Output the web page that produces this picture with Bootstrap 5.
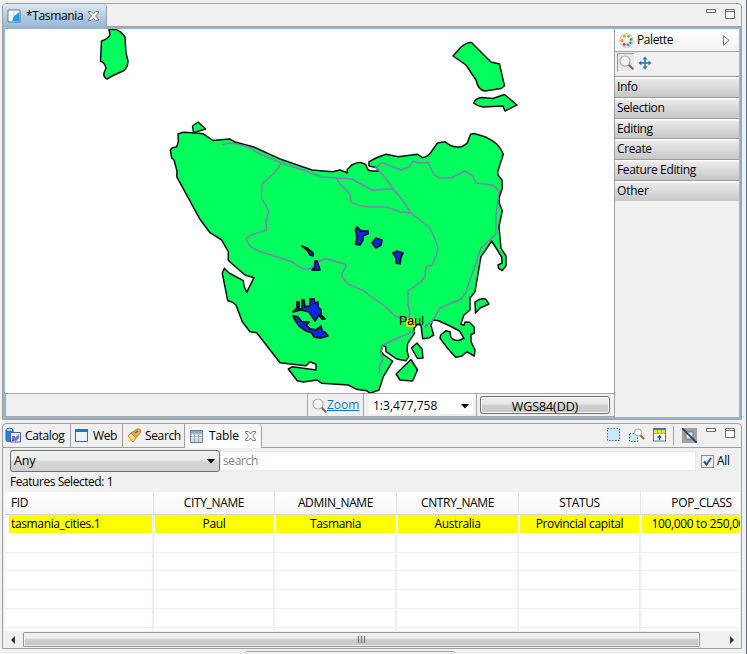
<!DOCTYPE html>
<html lang="en">
<head>
<meta charset="utf-8">
<title>Tasmania</title>
<link href="https://cdn.jsdelivr.net/npm/bootstrap@5.3.0/dist/css/bootstrap.min.css" rel="stylesheet">
<style>
body{width:747px;height:654px;overflow:hidden;background:#f0f0f0;font:12px/16px "Open Sans","Noto Sans",sans-serif;letter-spacing:-.36px;color:#000;white-space:nowrap}
svg{display:block;flex:none}
.shell{width:747px;height:654px;padding:3px 4px 0 2px;border-right:1px solid #5a6f82}
.pane{width:740px;border:1px solid #a0a0a0;border-radius:4px 4px 0 0}
.editor{height:417px}
.views{height:226px;margin-top:3px}
.tabstrip{height:23px;border-bottom:1px solid #a0a0a0}
.views .tabstrip{height:24px}
.edtab{width:104px;height:25px;padding:0 0 2px 4px;background:linear-gradient(#dfe8f1,#b4cbe0 50%,#92b5d3);border-right:1px solid #a0a0a0;border-radius:3px 4px 0 0;z-index:1}
.edtab span{width:56px;margin:0 6px 0 5px}
.winbtns{gap:9px;padding:4px 6px 0 0}
.frame{height:392px;background:#92b5d3;padding:2px}
.mapcol{width:609px;background:#fff}
.statusbar{height:24px;background:#f0f0f0;border:1px solid #a9a9a9;border-width:1px 0 1px 1px;padding-right:2px}
.palette-col{width:125px;background:#f0f0f0;border-left:1px solid #a0a0a0}
.pal-head{height:23px;padding:0 9px 0 4px;background:linear-gradient(#fff,#f2f2f2);border-bottom:1px solid #a0a0a0}
.pal-head span{margin-left:3px;letter-spacing:-.42px}
.pal-tools{height:24px;padding:1px 0 0 2px}
.pressed{width:18px;height:19px;border:1px solid;border-color:#999 #fff #fff #999;background:#e8e8e8;padding:1px}
.pan-icon{margin:3px 0 0 3px}
.drawer{height:20.8px;line-height:20px;padding-left:2px;border-top:1px solid #9c9c9c;background:linear-gradient(#fff 0,#fff 1px,#eaeaea 2px,#c6c6c6 100%)}
.drawer:last-child{letter-spacing:-.2px}
.sep{width:1px;background:#a5a5a5;align-self:stretch}
.zoomcell{width:55px;padding-left:4px}
.zoomlink{color:#0b74cf;text-decoration:underline;letter-spacing:0}
.scalebox{width:104px;height:20px;background:#fff;padding:4px 4px 0 4px;margin-left:5px;margin-right:3px;letter-spacing:0}
.crs{width:130px;height:18px;border:1px solid #707070;border-radius:3px;background:linear-gradient(#f2f2f2,#e6e6e6 45%,#cfcfcf 50%,#c8c8c8);box-shadow:inset 0 0 0 1px #f8f8f8;text-align:center;line-height:19px;font-size:12.5px;letter-spacing:-.1px;margin:2px 2px 0 3px;overflow:hidden}
.viewtab{height:23px;border-right:1px solid #a0a0a0}
.vt-catalog{width:68px;padding-left:2px;gap:3px}
.vt-web{width:52px;padding-left:4px;gap:5px}
.vt-search{width:62px;padding-left:3px;gap:3px}
.vt-table{width:77px;height:24px;padding-left:5px;gap:6px;border-radius:0 4px 0 0;background:linear-gradient(#f4f4f4,#fff)}
.vt-table span{letter-spacing:-.1px}
.toolrow{padding:4px 6px 0 0}
.toolrow .sep{margin:-2px 8px 3px 7px;height:19px}
.ic-a{margin-left:9px}
.ic-b{margin-left:8px}
.wb{margin:-1px 0 0 9px}
.filterrow{height:25px;padding:1px 0 0 7px}
.countrow{height:19px;padding:1px 0 0 7px;letter-spacing:-.45px}
.anybox{width:210px;height:22px;border:1px solid #707070;border-radius:3px;background:linear-gradient(#f2f2f2,#e8e8e8 48%,#d6d6d6 52%,#cfcfcf);padding:0 4px 0 3px;font-size:12.5px;letter-spacing:-.2px}
.searchbox{width:476px;height:20px;background:#fff;border:1px solid #e3e9ef;color:#838383;padding-left:2px;line-height:17px}
.chk{width:13px;height:13px;border:1px solid #8e8f8f;background:#eef1f4;margin:0 3px 0 5px}
.gridwrap{width:735px;height:139px;margin-left:2px;background:#fff;overflow:hidden}
.attrs{width:758px;table-layout:fixed;border-collapse:separate;border-spacing:0;text-align:center}
.c-fid{width:149px}.c-city{width:121px}.c-rest{width:122px}
.attrs th{font-weight:400;height:23px;padding:0;background:linear-gradient(#fff,#f5f6f7);border-right:1px solid #e2e5e9;border-bottom:1px solid #d5d5d5}
.attrs td{height:18.8px;line-height:16px;padding:0;border-right:2px solid #e9f0f9;border-bottom:1px solid #f0f0f0}
.attrs .hit td{background:#ff0;border-left:1px solid #fff;border-bottom:1px solid #fff}
.attrs th:first-child,.attrs td:first-child{text-align:left;padding-left:6px}
.attrs .hit td:first-child{border-left:4px solid #fff;padding-left:2px}
.hscroll{height:17px;width:735px;margin-left:2px;background:#f0f0f0}
.thumb{width:677px;height:15px;border:1px solid #979797;border-radius:1px;background:linear-gradient(#f5f5f5,#e6e6e6 46%,#cfcfcf 50%,#c6c6c6);box-shadow:inset 0 0 0 1px #eee}
.nextpane{height:3px;width:210px;margin:2px 0 0 243px;border-top:1px solid #a0a0a0;border-radius:3px 3px 0 0}
</style>
<script src="https://cdn.jsdelivr.net/npm/bootstrap@5.3.0/dist/js/bootstrap.bundle.min.js"></script>
</head>
<body>
<svg width="0" height="0" class="position-absolute">
<defs>
<g id="i-close" fill="#fff" stroke="#666" stroke-width=".9"><path d="M.5.5h2.8L5.5 3 7.7.5h2.8v1.2L7.6 5l2.9 3.4v1.2H7.7L5.5 7.200 3.300 9.600H.5V8.400L3.400 5 .5 1.700z"/></g>
<g id="i-win" fill="#fff" stroke="#6a6a6a"><path d="M.5 1.500h9v9h-9z"/><path d="M.5 3.500h9" /></g>
<g id="i-min" fill="#fff" stroke="#6a6a6a"><path d="M.5 1.500h9v3h-9z"/></g>
<g id="i-lens"><path d="M9.500 9.500l4.200 4.200" stroke="#8d6258" stroke-width="2.200" stroke-linecap="round"/><circle cx="6" cy="6" r="5" fill="#eef4f7" stroke="#aaa9a0" stroke-width="1.100"/><path d="M3.200 5.500a3 3 0 0 1 3-2.500" fill="none" stroke="#fff" stroke-width="1.300"/></g>
</defs>
</svg>
<div class="shell">
 <section class="pane editor">
  <div class="tabstrip d-flex justify-content-between">
   <div class="edtab d-flex align-items-center">
    <svg width="14" height="14"><path d="M1 1h12v12H1z" fill="#fff" stroke="#687785"/><path d="M1 7h12M7 1v12" stroke="#d5d5d5"/><path d="M5 12.500L7 7l5.500-4v9.500z" fill="#16a0ef"/></svg>
    <span>*Tasmania</span>
    <svg width="11" height="10"><use href="#i-close"/></svg>
   </div>
   <div class="winbtns d-flex"><svg width="10" height="12"><use href="#i-min"/></svg><svg width="10" height="12"><use href="#i-win"/></svg></div>
  </div>
  <div class="frame d-flex">
   <div class="mapcol d-flex flex-column">
    <svg width="608" height="364" viewBox="5 29 608 364">
     <g fill="#00ff5c" stroke="#101010" stroke-width="1.500" stroke-linejoin="round">
      <path d="M178 134L183 132.300 193 132.700 203 133.700 213 140.500 229.500 139 235 142 253 146.700 280 159 312 170 332.700 171.700 340 170 347.300 172.700 347.300 169.500 351.700 165Q357 162 361.500 162.700L365.700 164.500 367.500 169Q369 171.500 373 171L379 171 376 167.500 369 166 369 161.700Q377 157 386 154.300L398.500 156.700 417.500 154.300 422.700 157.700Q427 157 429.500 154.300L437.500 143 445 141.700 450 145.300Q456 148 461.500 146.700 466 145 467.500 142.500L470.500 134.300 474 133.500 485 136.700Q492 140 496.700 144 501 148 503.300 154.300L497.700 171.700 498 175 502 180 502.300 188 499 198.300 499.500 204 502.300 210.700 499 226.700 501 248.300 506 256 506 265.700 502.300 270.500 498.700 268.700 498 265 502 263 501.700 257 491.700 241 481 256.700 480 262 475 291.700 470 298 470 310 464 315 460.700 324.300 464 325.300 465 322 469.500 322.300 474.300 327.300 474.300 333 471 334.500 471 341.700 475 350 474.300 356 466.700 351.700 462 356 455.700 357.300 447.500 348.300 440 338.300 440.700 335 446 330.700 450 331.700 450.700 336.700Q453 341 459 340.500L464 338.300 459.500 331 450 326 438.500 320.700 433 320 431.700 323 431 325.700 433.700 335 429.500 337.700 422.700 338.700 421 325.300 417.500 324.300 414 328.300 414.500 333.300 407.700 343.300 407 351 408.700 356.700 406 360.700 396.700 359 386 351.700 385.700 346.700 382.500 345.300 381 351.700 384 355 392.700 361 383.300 376.700 379 390 370 393.300 366.700 390.700 356.700 389.300 348.300 385 321.700 383.300 317.300 380 303.300 382 297.300 380.700 288.300 369 292.700 366.700 316 370 316 364.300 310 361.700 306 365.700 280 362.700 256.700 332.700 250 331.700 242.300 321.700 236 305 232 302 227.700 300.700 222.300 273.300 224.300 268.300 229 273 243.300 280.700 244 286 246.700 292.300 254 277.700 245 275 230 262 228.300 260 228.300 251.700 221.700 240 210 232.700 200 219.300 176.700 176.700 177 171 174 160 171.700 158 170.300 150 172 148 176.700 146.700 178.300 141.700z"/>
      <path d="M193.500 132.700L192.500 126 198 122 205.500 129z"/>
      <path d="M109 29.500L116 29.500Q122 32 125 37L126 53 128 61Q128 67 124 70.500L112 76 107 79Q103 77 104 73L106 68Q105 63 100.500 61L101.500 41Q108 39 110 35z"/>
      <path d="M453 56L461 47Q467 42 471.500 42.500L491 62 499.500 64 504.500 86 501 88.500 485 91Q478 90 476 80L466 65z"/>
      <path d="M473.500 103Q476 98 482 97.500L493 98.500 504.500 94.500 517 105 505 111 503 106 483 107Q477 106 473.500 103z"/>
      <path d="M475.500 313L475 302Q480 298 485.500 299L489 304 480 308z"/>
      <path d="M411.500 348L417 343 422 349 423 358 417.500 358.500z"/>
      <path d="M396 374L411 359.500 417.500 370 412.500 381 400 380z"/>
     </g>
     <g fill="none" stroke="#7c82ad" stroke-width="1.500" stroke-linejoin="round">
      <path d="M222 145Q227 142 237 144L248 147 258 153 270 158 281 163 300 169 322 177 352 179 373 190.500 393 188.500"/>
      <path d="M281 163Q276 172 271 176L262 184 261.500 198 269 211 266 220 266.500 230 251 235 246 239 250 246Q256 251 268 254L284 259 292 262 301 268Q306 270 311 268L316 263 325 258.500 345 264 346 267 342 273Q342 279 348 284L364 291 373 298 386 307 395 316 408 321"/>
      <path d="M337 179L339 183 350 194 351 202Q357 206 369 207L386 207 401 212 411 213"/>
      <path d="M375 167L384 176 393 188.500 403 201 411 213 430 228 436 242Q440 250 435 258L432 265 426 267 425 276 421 282 408 291 408 304 410 314 407 320"/>
      <path d="M377 170Q377 164 383 163L401 170 409 167 413 161 419 163 428 162.500 434 175 440 178 451 178 465 171 472 175 476 183 492 185Q498 187 499 193L496 215 496 234 481 248 475 266 470 280 466 292 461 299 440 308 432 322 424 327"/>
      <path d="M415 331L400 337 383 345 381 354 383 360 379 367 380 374"/>
     </g>
     <g fill="#0829e8" stroke="#07152d" stroke-width="1.800" stroke-linejoin="round">
      <path d="M357 227L361 231 368 231 368 234 363 236 363 240 360 245 355.500 244 357 238 355.500 230z"/><path d="M376 238L382 240 381 245 376 248 372 243z"/><path d="M393 253L397 251 403 253 401 257 400 264 396 263 396 258z"/>
      <path d="M302 246L307 248 313 253 313 256 310 255 308 251z"/><path d="M315 261L317 261 320 270 312 270 315 267z"/>
      <path d="M293 312L297 308 297 302 299 302 299 309 302 309 302 300 304 300 305 307 310 306 310 299 314 299 315 303 318 302 318 307 321 310 321 315 325 319 322 319 319 315 315 321 309 312 301 310z"/>
      <path d="M293 316L298 317 302 322 309 322 306 325 310 329 316 330 321 326 322 331 325 332 328 336 321 338 314 337 312 333 306 331 299 326 295 320z"/>
     </g>
     <rect x="406" y="318" width="9" height="9" rx="1.500" fill="#f5e01b"/><circle cx="410.500" cy="322.500" r="2.500" fill="none" stroke="#8e9b19"/>
     <text x="399" y="325" font-family="Liberation Sans,sans-serif" font-size="12.500" letter-spacing="0">Paul</text>
    </svg>
    <div class="statusbar d-flex justify-content-end">
     <span class="sep"></span>
     <div class="zoomcell d-flex align-items-center"><svg width="15" height="15"><use href="#i-lens"/></svg><span class="zoomlink">Zoom</span></div>
     <span class="sep"></span>
     <div class="scalebox d-flex align-items-center justify-content-between"><span>1:3,477,758</span><svg width="8" height="5"><path d="M0 0h8L4 4.500z"/></svg></div>
     <span class="sep"></span>
     <div class="crs">WGS84(DD)</div>
    </div>
   </div>
   <aside class="palette-col">
    <div class="pal-head d-flex align-items-center">
     <svg width="15" height="15"><circle cx="7.500" cy="7.500" r="6.800" fill="#e3eefb" stroke="#b3c6e0"/><circle cx="5.500" cy="3.300" r="1.300" fill="#e6a400"/><circle cx="9.500" cy="3.300" r="1.300" fill="#94b60b"/><circle cx="12" cy="6.500" r="1.300" fill="#21a927"/><circle cx="11.500" cy="9.800" r="1.200" fill="#219b48"/><circle cx="9" cy="11.800" r="1.300" fill="#247de0"/><circle cx="5.200" cy="11.500" r="1.400" fill="#e8302d"/><circle cx="3" cy="7.500" r="1.500" fill="#ff9200"/><circle cx="7.500" cy="7.500" r="2" fill="#fff"/></svg>
     <span>Palette</span>
     <svg class="ms-auto" width="7" height="11"><path d="M.5.7L6.200 5.500.5 10.300z" fill="#fff" stroke="#777"/></svg>
    </div>
    <div class="pal-tools d-flex"><div class="pressed"><svg width="15" height="15"><use href="#i-lens"/></svg></div>
     <svg class="pan-icon" width="14" height="14"><path d="M7 2v10M2 7h10" stroke="#2672a8" stroke-width="1.400"/><path d="M7 .5L9.500 3.500h-5zM7 13.500L4.500 10.500h5zM.5 7L3.500 4.500v5zM13.500 7l-3 2.500v-5z" fill="#2672a8"/></svg></div>
    <div class="drawer">Info</div><div class="drawer">Selection</div><div class="drawer">Editing</div><div class="drawer">Create</div><div class="drawer">Feature Editing</div><div class="drawer">Other</div>
   </aside>
  </div>
 </section>
 <section class="pane views">
  <div class="tabstrip d-flex">
   <div class="viewtab vt-catalog d-flex align-items-center"><svg width="17" height="17"><path d="M1 3v10c0 2 7 2 7 0V3" fill="#2384d8" stroke="#1765a8"/><ellipse cx="4.500" cy="3" rx="3.500" ry="1.700" fill="#b7dcf5" stroke="#1765a8"/><path d="M5.500 5.500h10v9.500h-10z" fill="#eef4fd" stroke="#4260b0"/><path d="M7 14V9h3v2l4-4v4l-3 3z" fill="#8169c7"/></svg><span>Catalog</span></div>
   <div class="viewtab vt-web d-flex align-items-center"><svg width="13" height="13"><path d="M.5.5h12v12H.5z" fill="#e7f4fb" stroke="#496b91"/><path d="M0 0h13v3H0z" fill="#1b78c4"/></svg><span>Web</span></div>
   <div class="viewtab vt-search d-flex align-items-center"><svg width="16" height="15"><path d="M0 14l2-6 5 5z" fill="#fff0b8"/><path d="M2 8l3-3 5 5-3 4z" fill="#fbd68a" stroke="#a87328" stroke-width=".8"/><path d="M5 5l6-4q4-1 4 3l-5 6z" fill="#efa54a" stroke="#a87845" stroke-width=".8"/><path d="M9 5l3-2" stroke="#40639e" stroke-width="1.500"/></svg><span>Search</span></div>
   <div class="viewtab vt-table d-flex align-items-center"><svg width="13" height="13"><path d="M.5.5h12v12H.5z" fill="#fff" stroke="#687c9b"/><path d="M1 1h11v2.500H1z" fill="#8ca8ce"/><path d="M1 4h11M1 6.500h11M1 9h11M1 11h11M4.500 1v11M8.500 1v11" stroke="#8fa3bd" stroke-width=".8"/></svg><span>Table</span><svg width="11" height="10"><use href="#i-close"/></svg></div>
   <div class="toolrow d-flex ms-auto align-items-start">
    <svg width="13" height="13"><path d="M.5.5h12v12H.5z" fill="#c9eafa" stroke="#36618c" stroke-dasharray="1.500 1.500"/></svg>
    <svg class="ic-a" width="16" height="15"><path d="M.5 5.500h8v8h-8z" fill="#c9eafa" stroke="#3f6a93" stroke-dasharray="1.500 1.500"/><path d="M11 7l4 4" stroke="#9a6247" stroke-width="2"/><circle cx="9" cy="4.500" r="3.600" fill="#f8fbfc" stroke="#a3a18e"/></svg>
    <svg class="ic-b" width="13" height="14"><path d="M.5.5h12v12.500H.5z" fill="#fff" stroke="#4973a0"/><path d="M0 0h13v2H0z" fill="#3d78b2"/><path d="M1 2h11v3.500H1z" fill="#ffe11b"/><path d="M1 5.500h11M4.500 2v4M8.500 2v4" stroke="#8e9c8a" stroke-width=".7"/><path d="M6.500 7v5M4.500 9h4" stroke="#24598c" stroke-width="1.500"/></svg>
    <span class="sep"></span>
    <svg width="15" height="15"><path d="M0 0h15v15H0z" fill="#a0a0a0"/><path d="M4 4h7v7H4z" fill="#eee" stroke="#777"/><path d="M0 0l15 15" stroke="#173f83" stroke-width="1.700"/></svg>
    <svg class="wb" width="10" height="12"><use href="#i-min"/></svg><svg class="wb" width="10" height="12"><use href="#i-win"/></svg>
   </div>
  </div>
  <div class="filterrow d-flex align-items-center">
   <div class="anybox d-flex align-items-center justify-content-between"><span>Any</span><svg width="8" height="5"><path d="M0 0h8L4 4.500z"/></svg></div>
   <div class="searchbox">search</div>
   <div class="chk"><svg width="11" height="11"><path d="M2 5.500l2.500 3L9 2" fill="none" stroke="#36558c" stroke-width="2"/></svg></div><span>All</span>
  </div>
  <div class="countrow">Features Selected: 1</div>
  <div class="gridwrap">
   <table class="attrs">
    <colgroup><col class="c-fid"><col class="c-city"><col class="c-rest"><col class="c-rest"><col class="c-rest"><col class="c-rest"></colgroup>
    <thead><tr><th>FID</th><th>CITY_NAME</th><th>ADMIN_NAME</th><th>CNTRY_NAME</th><th>STATUS</th><th>POP_CLASS</th></tr></thead>
    <tbody>
     <tr class="hit"><td>tasmania_cities.1</td><td>Paul</td><td>Tasmania</td><td>Australia</td><td>Provincial capital</td><td>100,000 to 250,000</td></tr>
     <tr><td></td><td></td><td></td><td></td><td></td><td></td></tr><tr><td></td><td></td><td></td><td></td><td></td><td></td></tr><tr><td></td><td></td><td></td><td></td><td></td><td></td></tr><tr><td></td><td></td><td></td><td></td><td></td><td></td></tr><tr><td></td><td></td><td></td><td></td><td></td><td></td></tr><tr><td></td><td></td><td></td><td></td><td></td><td></td></tr>
    </tbody>
   </table>
  </div>
  <div class="hscroll d-flex align-items-center">
   <svg width="18" height="8"><path d="M10 0v8L6 4z" fill="#333"/></svg>
   <div class="thumb d-flex align-items-center justify-content-center"><svg width="9" height="7"><path d="M1.500 0v7M4.500 0v7M7.500 0v7" stroke="#777" stroke-width="1.300"/></svg></div>
   <svg class="ms-auto" width="12" height="8"><path d="M2 0v8l4-4z" fill="#333"/></svg>
  </div>
 </section>
 <div class="nextpane"></div>
</div>
</body>
</html>
